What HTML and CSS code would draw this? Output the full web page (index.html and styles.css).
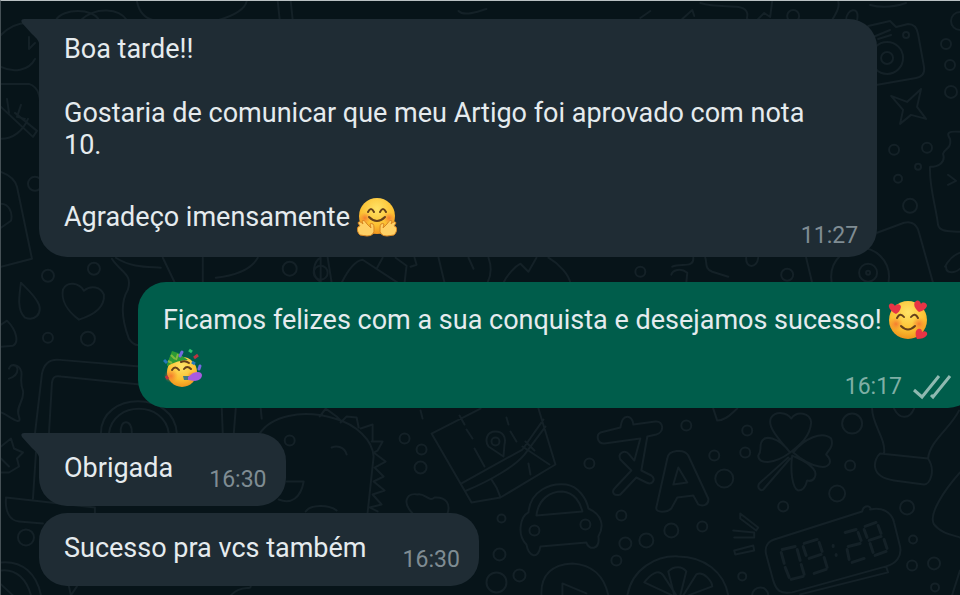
FILE: index.html
```html
<!DOCTYPE html>
<html lang="pt-BR">
<head>
<meta charset="utf-8">
<meta name="viewport" content="width=device-width, initial-scale=1">
<title>Conversa</title>
<link rel="stylesheet" href="styles.css">
</head>
<body>
<main class="chat">
  <svg class="wallpaper" viewBox="0 0 960 595" preserveAspectRatio="xMinYMin slice" aria-hidden="true">
    <!-- small dots -->
    <g>
      <circle cx="47" cy="275" r="6"/><circle cx="93" cy="268" r="6"/><circle cx="47" cy="337" r="5"/><circle cx="87" cy="338" r="7"/>
      <circle cx="34" cy="183" r="7"/><circle cx="289" cy="268" r="7"/><circle cx="25" cy="537" r="8"/><circle cx="320" cy="272" r="7"/>
      <circle cx="906" cy="34" r="3"/><circle cx="946" cy="43" r="5"/><circle cx="950" cy="64" r="5"/><circle cx="951" cy="91" r="6"/><circle cx="960" cy="20" r="9"/>
      <circle cx="894" cy="149" r="5"/><circle cx="927" cy="147" r="5"/><circle cx="918" cy="166" r="3"/><circle cx="898" cy="178" r="4"/><circle cx="910" cy="205" r="7"/>
      <circle cx="640" cy="271" r="5"/><circle cx="787" cy="274" r="6"/><circle cx="793" cy="15" r="6"/>
      <circle cx="404" cy="438" r="5"/><circle cx="421" cy="449" r="5"/><circle cx="420" cy="467" r="6"/><circle cx="289" cy="440" r="5"/><circle cx="501" cy="518" r="4"/>
      <circle cx="499" cy="554" r="6"/><circle cx="519" cy="575" r="6"/><circle cx="496" cy="582" r="10"/>
      <circle cx="686" cy="425" r="5"/><circle cx="747" cy="430" r="5"/><circle cx="714" cy="455" r="5"/><circle cx="745" cy="452" r="5"/><circle cx="724" cy="478" r="9"/>
      <circle cx="589" cy="463" r="5"/><circle cx="852" cy="423" r="10"/><circle cx="850" cy="465" r="5"/><circle cx="837" cy="493" r="8"/><circle cx="783" cy="506" r="5"/>
      <circle cx="621" cy="515" r="5"/><circle cx="671" cy="530" r="7"/><circle cx="702" cy="526" r="5"/><circle cx="625" cy="543" r="6"/><circle cx="646" cy="540" r="7"/><circle cx="616" cy="560" r="5"/>
      <circle cx="742" cy="576" r="4"/><circle cx="760" cy="595" r="8"/><circle cx="907" cy="507" r="7"/><circle cx="913" cy="539" r="4"/><circle cx="912" cy="565" r="5"/><circle cx="934" cy="563" r="6"/><circle cx="935" cy="587" r="4"/>
    </g>
    <!-- top left: shells, leaf, bag -->
    <path d="M0 34C8 26 18 22 26 22M34 58C28 70 12 72 0 66M55 19C62 7 92 7 98 19M80 19C96 5 118 8 126 19M136 0C138 10 144 17 152 19M246 0C244 10 228 16 218 19M277 0 279 19M290 0 292 19M28 36V48L34 42"/>
    <path d="M0 83H28C38 86 40 98 39 106M0 106 32 136 36 130 14 112M6 98 8 112M20 104 16 116 24 118M0 138C12 138 22 130 27 118"/>
    <path d="M0 171C8 174 14 178 16 186L31 258 0 266M0 203C8 203 12 212 10 220L0 227"/>
    <!-- drops, heart, map outline -->
    <path d="M20 282C18 296 16 310 24 317 34 321 41 313 38 304 35 296 28 290 20 282ZM0 324 6 320C16 330 18 342 12 345L0 346"/>
    <path d="M78 319C66 310 60 299 62 289 66 280 78 282 83 290 90 284 100 286 103 294 104 306 94 314 78 319Z"/>
    <path d="M111 258C120 272 132 273 127 289 118 304 122 322 128 338 132 344 136 345 139 344M115 257C130 267 148 266 160 267M162 257 174 282M202 257V282M215 277C232 275 250 270 257 257"/>
    <!-- strip between the first two bubbles -->
    <path d="M321 282C308 274 314 260 320 257V282M327 257 331 282M341 282C346 272 354 260 362 259L397 282M376 268 382 257M395 257 406 265 404 282M414 257 416 264 410 266M438 257 444 282M468 257 473 268M488 257C492 268 490 276 487 282M503 282C507 274 514 266 520 263L528 271 536 257M548 257C560 264 568 274 570 282M671 274C672 270 680 266 687 272L686 282M705 257C707 262 704 268 712 271L728 276M672 266C680 262 694 268 693 257M746 257C745 268 757 268 758 257"/>
    <path d="M806 257 812 282M877 232 904 222C912 220 917 224 919 232L933 282"/>
    <circle cx="860" cy="276" r="29"/><circle cx="868" cy="272" r="9"/><circle cx="868" cy="272" r="2"/>
    <!-- laptop and badge -->
    <path d="M34 433 41 373C43 363 48 359 56 359L139 366M48 433 51 382C52 376 54 375 60 376L139 384M100 433C100 390 174 390 176 433M108 433C112 400 164 400 168 433M120 433C118 418 132 418 131 433M221 408 222 433M235 408 233 433"/>
    <path d="M0 412C4 412 22 428 18 416 14 406 24 400 22 390 18 380 22 374 20 370 18 364 10 362 8 368M8 378C20 374 18 362 10 365"/>
    <path d="M0 446 10 438 13 448 22 452 16 458 18 466 8 472H0M0 458 8 466M35 452 32 498M5 498C4 510 8 520 18 521L42 523M5 497 94 507V513M0 562C22 560 36 574 40 595M0 570C16 568 26 580 30 595M12 595 0 584M68 586 70 595 76 586M230 595C240 584 250 590 250 586"/>
    <!-- camera, sparkle and puzzle on the right -->
    <path d="M868 25 890 20 896 26 908 23C914 23 917 27 918 33L924 66C925 73 922 76 916 77L876 84M873 36 890 29M878 38 891 34"/>
    <circle cx="887" cy="57" r="16"/><circle cx="887" cy="57" r="6"/>
    <path d="M891 95 907 101 921 88 917 106 926 118 911 114 900 123 903 109Z"/>
    <path d="M960 131C948 130 946 132 950 138 952 148 944 148 943 153 946 162 938 166 930 166 929 186 936 206 938 224 940 232 950 230 960 231M948 174 956 180 948 184M945 266C948 260 954 254 960 252M946 266C946 274 956 272 960 268"/>
    <path d="M640 17 650 10M682 18 692 9 694 15M700 2C720 8 740 2 746 10 750 16 742 19 752 19M757 19 764 12 770 16 772 0M832 19C836 12 840 6 838 0M846 19C846 8 860 4 857 19M870 4C885 8 900 4 906 2M458 10C464 16 478 10 486 8"/>
    <!-- dinosaur -->
    <path d="M259 433C270 416 300 408 334 418 356 424 372 440 373 456L367 512M319 416 325 408 336 416 340 420M340 422 346 416 356 417 358 427M360 428 372 424 372 440M371 441 382 441 377 450 373 452 385 461 374 467 383 476 373 481 384 490 372 494 381 504 369 507 377 511M286 481H303C300 498 290 504 278 499M331 447C336 445 344 446 346 454M305 511C310 504 328 504 336 510"/>
    <path d="M260 408 261 418M412 513C400 500 408 492 417 494 424 492 428 502 434 497 446 496 450 504 447 513M420 410 422 418"/>
    <!-- folded map -->
    <path d="M480 408 431 433 471 502 500 497 555 464 538 408M461 483 522 449 543 419M466 490C490 480 514 466 524 454L545 426M459 415 464 424M466 429 472 438M474 448 484 466M506 417 508 424M510 431 516 441M522 446 549 464M525 441 534 450M528 463 530 474M491 479 496 487 500 497M503 456 504 444C506 436 502 431 495 431 486 431 484 440 488 446Z"/><circle cx="495" cy="441" r="4"/>
    <!-- car -->
    <path d="M528 512C530 490 550 482 566 484 578 486 586 498 588 508 602 514 604 526 598 536 600 550 588 550 586 542L540 546C538 560 528 556 526 544 516 534 520 516 528 512ZM536 515C538 498 550 491 562 491 574 492 580 502 582 511Z"/><circle cx="534" cy="530" r="5"/><circle cx="585" cy="524" r="5"/>
    <path d="M541 595C540 574 552 564 572 563 592 564 604 576 608 595M562 595V583L586 593"/>
    <!-- translation symbols -->
    <path d="M600 432 620 427C622 412 632 414 633 424L655 421C664 420 664 432 656 434L647 436 641 470 651 475C656 479 652 485 646 482L636 477 620 494C614 496 610 492 615 487L631 470 620 459C617 453 624 448 629 454L634 460 640 438 604 443C596 443 596 434 600 432Z"/>
    <path d="M667 458C668 449 684 448 688 455L708 498C709 505 702 506 698 504L693 495 677 497 671 508C667 512 655 513 656 507ZM678 467 687 482 673 484Z"/>
    <!-- clover -->
    <path d="M790 452C780 440 766 426 771 417 776 410 787 412 791 418 797 410 810 412 811 422 810 436 800 444 790 452ZM790 452C778 436 764 434 761 442 759 448 762 450 758 455 758 464 774 464 790 452ZM793 452C804 438 822 430 831 438 834 446 828 450 826 454 834 462 828 468 819 466 808 464 800 458 793 452ZM792 455C790 470 792 488 798 490 806 490 806 482 807 480 814 482 818 474 813 468 806 460 798 458 792 455ZM788 457 759 483C756 488 762 492 764 488L790 458M713 408 717 420C726 420 732 412 737 408"/>
    <!-- sock -->
    <path d="M872 408C872 424 886 438 884 453M928 458C930 440 950 428 959 410M880 453 928 458C936 470 930 484 924 484L894 480C868 476 874 458 880 453ZM894 408C900 420 910 418 914 408M960 472C944 490 928 514 934 524 940 532 950 534 960 537M960 570 952 595"/>
    <!-- digital clock -->
    <path d="M774 539 862 511C864 503 872 506 870 509 882 506 892 512 894 522L900 546C902 556 896 563 886 566L792 592C780 594 776 590 773 580L766 554C764 546 768 541 774 539ZM800 594 888 572 886 566M740 513 758 527 756 530 740 518ZM733 530 754 532V537L734 537M734 550 753 545 754 550 735 554Z"/>
    <path class="wallpaper-digits" d="M782 549 795 546M781 552 784 563M797 549 800 560M785 567 789 577M801 564 804 574M791 579 803 576M804 543 817 539M803 546 806 555M819 542 822 551M809 558 821 554M824 557 827 567M814 573 826 569M833 545V546M836 554V555M845 532 856 529M858 532 861 540M848 546 860 543M847 549 849 559M852 562 864 558M865 526 876 522M864 529 867 537M878 525 881 533M869 540 881 536M870 543 873 552M884 539 887 548M875 555 886 551"/>
    <!-- orange slice -->
    <path d="M627 595C632 568 656 555 678 556 704 556 724 572 728 595M672 595 644 582C650 574 658 568 663 575L676 595M674 595 668 571C674 565 682 566 686 571L680 595M683 595 696 574C704 570 712 582 712 586L688 595"/>
  </svg>

  <article class="message message-in has-tail">
    <svg class="tail" viewBox="0 0 18 24" aria-hidden="true"><path d="M3 0H18V24C17 20 13 17 10 14L1 4Q-1 0 3 0Z"/></svg>
    <div class="text">
      <p>Boa tarde!!</p>
      <p>Gostaria de comunicar que meu Artigo foi aprovado com nota 10.</p>
      <p class="tall">Agradeço imensamente <svg class="emoji" viewBox="0 0 40 40" role="img" aria-label="Rosto abraçando">
        <defs>
          <radialGradient id="face" cx=".5" cy=".3" r=".75"><stop offset="0" stop-color="#ffe367"/><stop offset=".6" stop-color="#fcc132"/><stop offset="1" stop-color="#ee8b18"/></radialGradient>
          <radialGradient id="blush"><stop offset="0" stop-color="#f36b2e" stop-opacity=".8"/><stop offset="1" stop-color="#f78332" stop-opacity="0"/></radialGradient>
        </defs>
        <circle cx="20" cy="19" r="18" fill="url(#face)"/>
        <circle cx="8" cy="21" r="6" fill="url(#blush)"/><circle cx="32" cy="21" r="6" fill="url(#blush)"/>
        <path d="M11 15Q14 9 17 15M23 15Q26 9 29 15M12 20Q20 28 28 20" fill="none" stroke="#65401b" stroke-width="2" stroke-linecap="round"/>
        <path d="M3 38C-1 34 0 29 3 29L1 26Q2 23 6 27L5 24Q7 22 10 27L14 31 13 27Q17 25 17 31 18 39 10 39ZM37 38C41 34 40 29 37 29L39 26Q38 23 34 27L35 24Q33 22 30 27L26 31 27 27Q23 25 23 31 22 39 30 39Z" fill="#ffd166" stroke="#d98722" stroke-width="1"/>
      </svg></p>
    </div>
    <footer class="meta"><time datetime="11:27">11:27</time></footer>
  </article>

  <article class="message message-out">
    <div class="text">
      <p class="tall">Ficamos felizes com a sua conquista e desejamos sucesso! <svg class="emoji" viewBox="0 0 40 40" role="img" aria-label="Rosto sorridente com corações">
        <circle cx="20" cy="20" r="19" fill="url(#face)"/>
        <circle cx="8" cy="24" r="7" fill="url(#blush)"/><circle cx="31" cy="24" r="7" fill="url(#blush)"/>
        <path d="M9 18Q12 12 16 17M23 17Q27 12 30 18M13 26Q20 33 27 26" fill="none" stroke="#65401b" stroke-width="2" stroke-linecap="round"/>
        <path d="M8 14C4 12 0 8 1 5 3 2 6 4 7 6 9 3 13 4 13 7 12 11 10 13 8 14ZM31 12C27 9 25 5 27 2 30-1 32 1 33 4 35 1 39 3 39 6 38 9 35 11 31 12ZM29 39C27 35 27 30 30 29 33 28 34 30 34 32 37 30 40 32 39 35 37 38 33 39 29 39Z" fill="#e83445"/>
      </svg> <svg class="emoji" viewBox="0 0 40 40" role="img" aria-label="Rosto festejando">
        <circle cx="19" cy="24" r="15" fill="url(#face)"/>
        <circle cx="8" cy="28" r="7" fill="url(#blush)"/><circle cx="29" cy="28" r="5" fill="url(#blush)"/>
        <path d="M4 16 9 3 15 5 25 12Q15 12 4 18Z" fill="#2c9a35"/>
        <path d="M8 7 12 11M15 6 13 12M5 13 9 15" fill="none" stroke="#82b83e" stroke-width="2"/>
        <path d="M9 22Q12 17 16 22M21 21Q24 17 28 21M18 14Q22 12 26 15" fill="none" stroke="#65401b" stroke-width="2" stroke-linecap="round"/>
        <path d="M20 28H26V32L21 32Z" fill="#467a7e"/><path d="M25 29 30 25Q38 22 39 27 39 32 32 33L25 32Z" fill="#a85be0"/>
        <path d="M19 4 17 8M36 21 37 18" stroke="#7469df" stroke-width="3" stroke-linecap="round"/>
        <path d="M26 2 29 4" stroke="#2bc071" stroke-width="3"/><path d="M31 10 35 7M3 28 5 31" stroke="#b93342" stroke-width="3"/><path d="M29 14 32 16M1 12 4 15" stroke="#2578bb" stroke-width="3"/>
      </svg></p>
    </div>
    <footer class="meta"><time datetime="16:17">16:17</time>
      <svg class="checks" viewBox="0 0 40 26" role="img" aria-label="Entregue"><path d="M2 16 10 23 27 2M19 21 21 23 38 2"/></svg>
    </footer>
  </article>

  <article class="message message-in message-short has-tail">
    <svg class="tail" viewBox="0 0 18 24" aria-hidden="true"><path d="M3 0H18V24C17 20 13 17 10 14L1 4Q-1 0 3 0Z"/></svg>
    <div class="text"><p>Obrigada</p></div>
    <footer class="meta"><time datetime="16:30">16:30</time></footer>
  </article>

  <article class="message message-in message-short">
    <div class="text"><p>Sucesso pra vcs também</p></div>
    <footer class="meta"><time datetime="16:30">16:30</time></footer>
  </article>
</main>
</body>
</html>
```
FILE: styles.css
```css
* {
  box-sizing: border-box;
}

body {
  margin: 0;
  background: #071419;
  color: #e5ebee;
  font-family: Roboto, "Liberation Sans", sans-serif;
  font-size: 27px;
  line-height: 32px;
}

p {
  margin: 0;
}

.chat {
  position: relative;
  display: flex;
  flex-direction: column;
  align-items: flex-start;
  min-height: 100vh;
  padding: 18px 0 9px 38px;
  border-top: 1px solid #b9c0c2;
  border-left: 1px solid #465156;
  overflow: hidden;
}

.wallpaper {
  position: absolute;
  inset: 0;
  width: 100%;
  height: 100%;
  fill: none;
  stroke: #142127;
  stroke-width: 2;
  stroke-linecap: round;
  stroke-linejoin: round;
}

.wallpaper-digits {
  stroke-width: 3;
}

.message {
  position: relative;
  display: grid;
  max-width: 91%;
  padding: 14px 19px 16px 25px;
  border-radius: 28px;
}

.message-in {
  background: #1f2c34;
}

.message-out {
  align-self: flex-end;
  margin: 25px -16px 25px 0;
  padding-right: 24px;
  border-radius: 28px 0 28px 28px;
  background: #005d4b;
}

.has-tail {
  border-top-left-radius: 0;
}

.tail {
  position: absolute;
  top: 0;
  left: -18px;
  width: 18px;
  height: 24px;
  fill: #1f2c34;
}

.text {
  display: grid;
  grid-area: 1 / 1;
  gap: 32px;
  margin-right: 12px;
}

.tall {
  line-height: 48px;
}

.emoji {
  width: 40px;
  height: 40px;
  margin-bottom: 4px;
  vertical-align: middle;
}

.meta {
  display: flex;
  grid-area: 1 / 1;
  align-items: center;
  align-self: end;
  justify-self: end;
  gap: 10px;
  margin-bottom: -10px;
  color: #7f8c93;
  font-size: 23px;
  line-height: 30px;
}

.message-out .meta {
  color: #7fafa5;
}

.checks {
  width: 40px;
  height: 26px;
  fill: none;
  stroke: #8fb9b1;
  stroke-width: 3;
}

.message-short {
  display: flex;
  align-items: flex-end;
  gap: 24px;
}

.message-short .text {
  line-height: 43px;
}

.message-short .meta {
  margin-bottom: -5px;
}

.message-short + .message-short {
  margin-top: 7px;
}
```
